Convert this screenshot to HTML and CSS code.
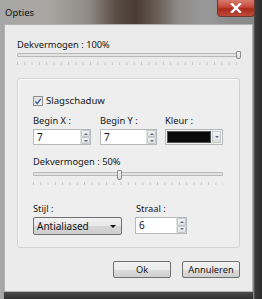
FILE: index.html
```html
<!DOCTYPE html>
<html>
<head>
<meta charset="utf-8">
<link rel="stylesheet" href="styles.css">
</head>
<body>
<div class="window">
  <div class="titlebar">
    <span class="title">Opties</span>
    <div class="close"><svg width="12" height="10" viewBox="0 0 12 10"><path d="M2 1 L10 9 M10 1 L2 9" stroke="#fff" stroke-width="2.4" stroke-linecap="square"/></svg></div>
  </div>
  <div class="client">
    <div class="label">Dekvermogen : 100%</div>
    <div class="slider s1">
      <div class="track"></div>
      <div class="thumb" style="left: 219px"></div>
      <div class="ticks"></div>
    </div>
    <div class="group">
      <div class="check-row">
        <span class="checkbox"><svg width="9" height="9" viewBox="0 0 9 9"><path d="M1.5 4.5 L3.6 7 L7.6 1.5" stroke="#3a5a9a" stroke-width="1.5" fill="none"/></svg></span>
        <span class="check-label">Slagschaduw</span>
      </div>
      <div class="fields">
        <div class="field fx">
          <div class="label">Begin X :</div>
          <div class="spin w58"><span class="val">7</span><span class="arrows"><i class="up"></i><i class="down"></i></span></div>
        </div>
        <div class="field fy">
          <div class="label">Begin Y :</div>
          <div class="spin w57"><span class="val">7</span><span class="arrows"><i class="up"></i><i class="down"></i></span></div>
        </div>
        <div class="field fk">
          <div class="label">Kleur :</div>
          <div class="color"><span class="swatch"></span><span class="drop"><i class="down"></i></span></div>
        </div>
      </div>
      <div class="label op2">Dekvermogen : 50%</div>
      <div class="slider s2">
        <div class="track"></div>
        <div class="thumb" style="left: 84px"></div>
        <div class="ticks"></div>
      </div>
      <div class="fields bottom">
        <div class="field fs">
          <div class="label">Stijl :</div>
          <div class="combo"><span>Antialiased</span><i class="tri"></i></div>
        </div>
        <div class="field fr">
          <div class="label">Straal :</div>
          <div class="spin w52 tall"><span class="val">6</span><span class="arrows"><i class="up"></i><i class="down"></i></span></div>
        </div>
      </div>
    </div>
    <div class="buttons">
      <div class="btn">Ok</div>
      <div class="btn">Annuleren</div>
    </div>
  </div>
  <div class="bottomframe"></div>
</div>
</body>
</html>
```

FILE: styles.css
```css
html, body {
  margin: 0;
  padding: 0;
  width: 262px;
  height: 299px;
  overflow: hidden;
  background: #2e2e2e;
}
.window {
  width: 262px;
  height: 299px;
  font-family: "Noto Sans", "Open Sans", sans-serif;
  font-size: 9.3px;
  color: #151515;
  background:
    linear-gradient(90deg, #a9a9a9 0px, #a2a2a2 4px, #c8c8c8 5px, transparent 6px),
    linear-gradient(180deg, #9a9a9a 0%, #8e8e8e 40%, #6d6d6d 100%);
  background-color: #8a8a8a;
  position: relative;
  display: flex;
  flex-direction: column;
}
.window::after {
  content: "";
  position: absolute;
  right: 0;
  top: 0;
  width: 9px;
  height: 299px;
  background: linear-gradient(90deg, #9a9a9a 0px, #3a3a3a 2px, #2a2a2a 9px);
}
.titlebar {
  height: 24px;
  position: relative;
  background:
    linear-gradient(90deg, #a6a6a6 0%, #a9a7a3 18%, #8f8a84 34%, #5a4d44 44%, #4a3c33 52%, #6a5e56 60%, #8d8b89 68%, #9a9a9a 78%, #8b8b8b 88%, #8a8a8a 100%);
}
.title {
  position: absolute;
  left: 5px;
  top: 6px;
  font-size: 9.5px;
  color: #111;
}
.close {
  position: absolute;
  left: 217px;
  top: 0;
  width: 38px;
  height: 17px;
  box-sizing: border-box;
  border: 1px solid #6a3a34;
  border-top: none;
  border-radius: 0 0 4px 4px;
  background: linear-gradient(180deg, #d77a6c 0%, #c4493a 45%, #a92b1c 55%, #c0493a 100%);
  display: flex;
  align-items: center;
  justify-content: center;
  z-index: 2;
}
.client {
  margin-left: 4px;
  width: 249px;
  height: 268px;
  box-sizing: border-box;
  background: #ebebeb;
  border: 1px solid #b4b4b4;
  padding: 13px 12px 0 12px;
  position: relative;
  z-index: 1;
}
.label {
  height: 14px;
  line-height: 14px;
  white-space: nowrap;
}
.slider {
  position: relative;
  height: 24px;
}
.track {
  position: absolute;
  left: 0;
  right: 0;
  top: 0;
  background: #e2e2e2;
  border: 1px solid #b9b9b9;
  border-radius: 1px;
  box-sizing: border-box;
  height: 4px;
}
.s1 { margin-top: 1px; margin-right: 1px; }
.s1 .track { right: 2px; }
.thumb {
  position: absolute;
  top: -2px;
  width: 5px;
  height: 8px;
  box-sizing: border-box;
  border: 1px solid #8a8a8a;
  border-radius: 1px 1px 2px 2px;
  background: linear-gradient(180deg, #fafafa, #d8d8d8);
}
.ticks {
  position: absolute;
  left: 0;
  right: 0;
  top: 9px;
  height: 3px;
  background-image: linear-gradient(90deg, #c6c6c6 1px, transparent 1px);
  background-size: 7.3px 3px;
}
.group {
  margin-top: 1px;
  height: 170px;
  box-sizing: border-box;
  border: 1px solid #d2d2d2;
  border-radius: 3px;
  box-shadow: inset 1px 1px 0 #fafafa;
  background: #eeeeee;
  padding: 16px 16px 0 15px;
}
.check-row {
  display: flex;
  align-items: center;
  height: 12px;
}
.checkbox {
  width: 10px;
  height: 10px;
  box-sizing: border-box;
  border: 1px solid #8e8f8f;
  background: linear-gradient(135deg, #dcdcdc, #f8f8f8);
  display: flex;
  align-items: center;
  justify-content: center;
  margin-right: 3px;
}
.check-label { line-height: 12px; font-size: 9.6px; }
.fields {
  display: flex;
  margin-top: 7px;
}
.field .label { height: 15px; line-height: 14px; }
.fx { width: 67px; }
.fy { width: 65px; }
.fk { width: 58px; }
.spin {
  height: 16px;
  box-sizing: border-box;
  border: 1px solid #b5b8bd;
  background: #fff;
  display: flex;
  justify-content: space-between;
}
.w58 { width: 58px; }
.w57 { width: 57px; }
.w52 { width: 52px; }
.spin.tall { height: 17px; margin-left: -1px; }
.val {
  padding-left: 3px;
  line-height: 14px;
  font-size: 10px;
}
.arrows {
  width: 9px;
  display: flex;
  flex-direction: column;
  border-left: 1px solid #e0e0e0;
}
.arrows i {
  flex: 1;
  display: block;
  background: linear-gradient(180deg, #f4f4f4, #dedede);
  border: 1px solid #c6c6c6;
  border-radius: 1px;
  position: relative;
}
.arrows i::after, .drop i::after {
  content: "";
  position: absolute;
  left: 50%;
  top: 50%;
  margin-left: -2px;
  margin-top: -1px;
  border-left: 2px solid transparent;
  border-right: 2px solid transparent;
}
.arrows i.up::after { border-bottom: 2px solid #5a6a8a; }
.arrows i.down::after, .drop i::after { border-top: 2px solid #5a6a8a; }
.color {
  width: 58px;
  height: 16px;
  box-sizing: border-box;
  border: 1px solid #b5b8bd;
  background: #f2f2f2;
  display: flex;
  padding: 1px;
  gap: 1px;
}
.swatch {
  flex: 1;
  background: #0a0a0a;
  border: 1px solid #555;
}
.drop {
  width: 9px;
  display: flex;
}
.drop i {
  flex: 1;
  display: block;
  position: relative;
  background: linear-gradient(180deg, #f4f4f4, #dcdcdc);
  border: 1px solid #c8c8c8;
}
.op2 { margin-top: 10px; }
.s2 { margin-top: 2px; height: 28px; }
.s2 .track { top: 1px; }
.s2 .thumb { top: -1px; height: 10px; }
.s2 .ticks { top: 11px; }
.fields.bottom { margin-top: 3px; }
.fs { width: 103px; }
.fr { width: 55px; }
.combo {
  width: 89px;
  height: 18px;
  box-sizing: border-box;
  border: 1px solid #707070;
  border-radius: 2px;
  background: linear-gradient(180deg, #f2f2f2 0%, #e6e6e6 50%, #d6d6d6 51%, #cdcdcd 100%);
  display: flex;
  align-items: center;
  justify-content: space-between;
  padding: 0 3px 0 3px;
  font-size: 10px;
}
.tri {
  display: block;
  width: 0;
  height: 0;
  border-left: 3px solid transparent;
  border-right: 3px solid transparent;
  border-top: 3px solid #111;
  margin-right: 2px;
}
.buttons {
  display: flex;
  justify-content: flex-end;
  gap: 11px;
  margin-top: 13px;
}
.btn {
  width: 58px;
  height: 17px;
  box-sizing: border-box;
  border: 1px solid #707070;
  border-radius: 2px;
  background: linear-gradient(180deg, #f2f2f2 0%, #ebebeb 50%, #dddddd 51%, #cfcfcf 100%);
  display: flex;
  align-items: center;
  justify-content: center;
  line-height: 14px;
}
.bottomframe {
  height: 7px;
  margin-left: 4px;
  width: 250px;
  background: linear-gradient(180deg, #4a4a4a, #2e2e2e);
}
```
